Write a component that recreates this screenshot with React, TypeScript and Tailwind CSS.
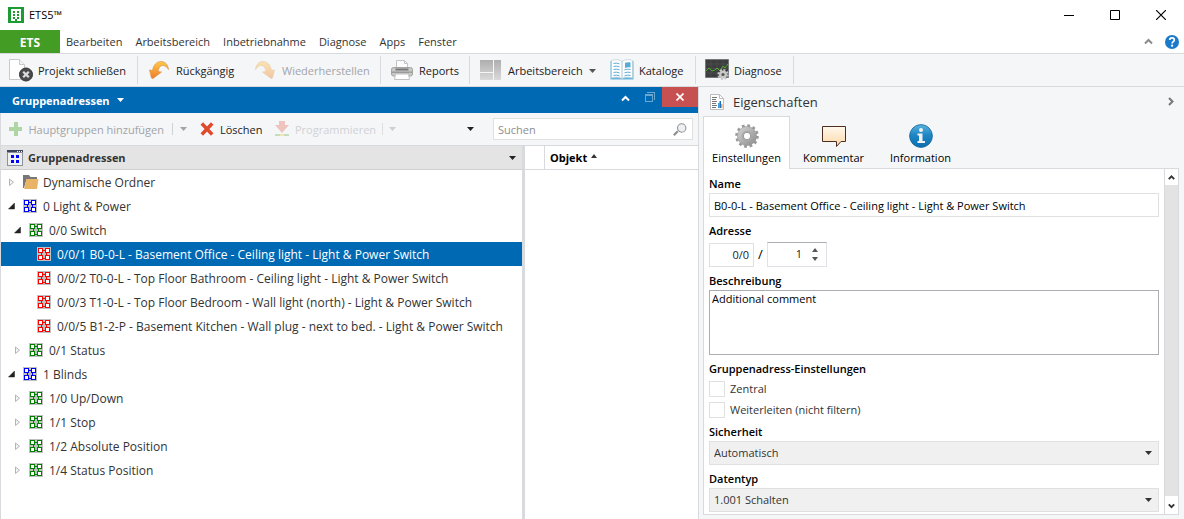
import { useState, type ReactNode } from "react";

type Kind = "folder" | "main" | "middle" | "address";

interface Row {
  label: string;
  kind: Kind;
  level: number;
  open?: boolean;
}

const rows: Row[] = [
  { label: "Dynamische Ordner", kind: "folder", level: 0, open: false },
  { label: "0 Light & Power", kind: "main", level: 0, open: true },
  { label: "0/0 Switch", kind: "middle", level: 1, open: true },
  { label: "0/0/1 B0-0-L - Basement Office - Ceiling light - Light & Power Switch", kind: "address", level: 2 },
  { label: "0/0/2 T0-0-L - Top Floor Bathroom - Ceiling light - Light & Power Switch", kind: "address", level: 2 },
  { label: "0/0/3 T1-0-L - Top Floor Bedroom - Wall light (north) - Light & Power Switch", kind: "address", level: 2 },
  { label: "0/0/5 B1-2-P - Basement Kitchen - Wall plug - next to bed. - Light & Power Switch", kind: "address", level: 2 },
  { label: "0/1 Status", kind: "middle", level: 1, open: false },
  { label: "1 Blinds", kind: "main", level: 0, open: true },
  { label: "1/0 Up/Down", kind: "middle", level: 1, open: false },
  { label: "1/1 Stop", kind: "middle", level: 1, open: false },
  { label: "1/2 Absolute Position", kind: "middle", level: 1, open: false },
  { label: "1/4 Status Position", kind: "middle", level: 1, open: false },
];

const groupColors = { main: "#0000ff", middle: "#008000", address: "#ff0000" };
const indents = ["pl-1.5", "pl-3", "pl-5"];

function Down({ className = "" }: { className?: string }) {
  return (
    <svg className={className} width="7" height="4" viewBox="0 0 7 4" fill="currentColor" aria-hidden="true">
      <path d="M0 0h7L3.500 4z" />
    </svg>
  );
}

function Up({ className = "" }: { className?: string }) {
  return (
    <svg className={className} width="6" height="4" viewBox="0 0 6 4" fill="currentColor" aria-hidden="true">
      <path d="M0 4h6L3 0z" />
    </svg>
  );
}

function Chevron({ d, size = 9, width = 2 }: { d: string; size?: number; width?: number }) {
  return (
    <svg width={size} height={size} viewBox="0 0 9 9" fill="none" stroke="currentColor" strokeWidth={width} aria-hidden="true">
      <path d={d} />
    </svg>
  );
}

const chevronUp = "M1 6.5l3.5-3.5L8 6.5";
const chevronDown = "M1 3l3.5 3.5L8 3";
const chevronRight = "M3 1l3.5 3.5L3 8";

function GroupIcon({ color }: { color: string }) {
  return (
    <svg width="14" height="14" viewBox="0 0 14 14" shapeRendering="crispEdges" aria-hidden="true">
      <path d="M0 0h14v14H0z" fill="#c0c0c0" />
      <path d="M1 1h5v5H1zM8 1h5v5H8zM1 8h5v5H1zM8 8h5v5H8zM6 3h2v1H6zM6 11h2v1H6zM4 6h1v2H4zM9 6h1v2H9z" fill={color} />
      <path d="M2 2h3v3H2zM9 2h3v3H9zM2 9h3v3H2zM9 9h3v3H9z" fill="#fff" />
    </svg>
  );
}

function FolderIcon() {
  return (
    <svg width="16" height="14" viewBox="0 0 16 14" aria-hidden="true">
      <path d="M0 0h6l1.500 2H14v2.500H3.500L1 13H0z" fill="#777" />
      <path d="M3.500 4H15.500L14 14H1z" fill="#e8b466" />
    </svg>
  );
}

function Expander({ open }: { open?: boolean }) {
  return (
    <span className="flex w-4 shrink-0">
      {open !== undefined && (
        <svg width="8" height="8" viewBox="0 0 8 8" aria-hidden="true">
          {open ? <path d="M7.500 1v6h-6z" fill="#222" stroke="#222" strokeWidth=".5" /> : <path d="M2.500 1v6.500L6.500 4.200z" fill="#f4f4f4" stroke="#b4b4b4" />}
        </svg>
      )}
    </span>
  );
}

function AppIcon() {
  return (
    <svg width="16" height="16" viewBox="0 0 16 16" shapeRendering="crispEdges" aria-hidden="true">
      <path d="M0 0h16v16H0z" fill="#1d9b35" />
      <path d="M3 2h10v12H3z" fill="#fff" />
      <path d="M5 4h2v2H5zM9 4h2v2H9zM5 7h2v2H5zM9 7h2v2H9zM5 10h2v2H5zM9 10h2v2H9zM7 12h2v2H7z" fill="#1d9b35" />
    </svg>
  );
}

function CloseProjectIcon() {
  return (
    <svg width="24" height="24" viewBox="0 0 24 24" aria-hidden="true">
      <path d="M.5 1.500h10l5 5v15H.5z" fill="#fff" stroke="#c9c9c9" />
      <path d="M10.500 1.500v5h5" fill="#f2f2f2" stroke="#c9c9c9" />
      <circle cx="17" cy="16.500" r="6.500" fill="#4a4a4c" stroke="#333" />
      <path d="M14.200 13.700l5.600 5.600m0-5.600l-5.600 5.600" stroke="#ddd" strokeWidth="2.200" />
    </svg>
  );
}

function UndoIcon({ flip = false }: { flip?: boolean }) {
  const id = flip ? "arrow-redo" : "arrow-undo";
  return (
    <svg width="20" height="20" viewBox="0 0 20 20" className={flip ? "-scale-x-100 opacity-40" : ""} aria-hidden="true">
      <linearGradient id={id} x2="0" y2="1">
        <stop stopColor="#ffc94a" />
        <stop offset="1" stopColor="#f07c28" />
      </linearGradient>
      <path d="M.5 10l3 .5C4.500 5 7.500 1.500 12 1.500c4 0 7 3 7.500 8-1.500-2.500-3.500-4-6-4-2.500.2-4 2.500-4.500 6l3.500.5L4 18.500 2.500 18z" fill={`url(#${id})`} stroke="#d98b3a" strokeWidth=".6" />
    </svg>
  );
}

function PrinterIcon() {
  return (
    <svg width="22" height="20" viewBox="0 0 22 20" aria-hidden="true">
      <path d="M5.500.5h8l3 3V9h-11z" fill="#fdfdfd" stroke="#c4c4c4" />
      <path d="M13.500.5v3h3" fill="none" stroke="#c4c4c4" />
      <rect x=".5" y="7.500" width="21" height="8.500" rx="2" fill="#c9c9c9" stroke="#a3a3a3" />
      <path d="M1 11.500h20v1.500H1z" fill="#9a9a9a" />
      <path d="M4.500 8.500h13v2h-13z" fill="#777" />
      <path d="M4.500 14h13l1 5.500h-15z" fill="#fff" stroke="#c2c2c2" />
      <path d="M18 11.500h2v1h-2z" fill="#8ed06a" />
    </svg>
  );
}

function WorkspaceIcon() {
  return (
    <svg width="21" height="20" viewBox="0 0 21 20" aria-hidden="true">
      <linearGradient id="pane" x2="0" y2="1">
        <stop stopColor="#aeaeae" />
        <stop offset="1" stopColor="#dadada" />
      </linearGradient>
      <path d="M0 0h13v12H0zM0 13h13v7H0zM14 0h7v20h-7z" fill="url(#pane)" />
    </svg>
  );
}

function CatalogIcon() {
  return (
    <svg width="24" height="22" viewBox="0 0 24 22" aria-hidden="true">
      <path d="M.5 2h23v18.500H.5z" fill="#6bb6dd" />
      <path d="M1.500 1.500C5 .2 9 .2 12 2.500v17c-3-1.500-7-1.800-10.500-.6zM22.500 1.500C19 .2 15 .2 12 2.500v17c3-1.500 7-1.800 10.500-.6z" fill="#fff" stroke="#b5cbd6" strokeWidth=".7" />
      <path d="M3.500 4.500c2-.5 4-.4 6 .4M3.500 7.500c2-.5 4-.4 6 .4M3.500 10.500c2-.5 4-.4 6 .4M3.500 13.500c2-.5 4-.4 6 .4M3.500 16.500c2-.5 4-.4 6 .4M14.500 10.900c2-.8 4-.9 6-.4M14.500 13.900c2-.8 4-.9 6-.4M14.500 16.900c2-.8 4-.9 6-.4" fill="none" stroke="#58abd6" />
      <path d="M15 3.800c2-.8 4-.8 5.500-.4v5c-2-.4-4-.2-5.500.5z" fill="#58abd6" />
    </svg>
  );
}

function DiagnosisIcon() {
  return (
    <svg width="24" height="22" viewBox="0 0 24 22" aria-hidden="true">
      <path d="M.5.5h23v18H.5z" fill="#3d3d3d" stroke="#777" />
      <path d="M1 5h22M1 9.500h22M1 14h22M6 1v17M12 1v17M18 1v17" stroke="#555" strokeWidth=".6" />
      <path d="M1 12l3-3 3 3 3-1 2-2 3 3 3-5 2 2 3-4" fill="none" stroke="#4fae2f" />
      <circle cx="18" cy="15.500" r="4" fill="#c8c8c8" />
      <circle cx="18" cy="15.500" r="4.600" fill="none" stroke="#c8c8c8" strokeWidth="2" strokeDasharray="1.900 1.700" />
      <circle cx="18" cy="15.500" r="1.600" fill="#555" />
    </svg>
  );
}

function WindowGridIcon() {
  return (
    <svg width="16" height="16" viewBox="0 0 16 16" shapeRendering="crispEdges" aria-hidden="true">
      <path d="M0 0h16v16H0z" fill="#8b919d" />
      <path d="M0 0h16v2H0z" fill="#3c465c" />
      <path d="M10 1h1v1h-1zM12 1h1v1h-1zM14 1h1v1h-1z" fill="#fff" />
      <path d="M1 3h14v12H1z" fill="#eef0f3" />
      <path d="M4 5h3v3H4zM9 5h3v3H9zM4 10h3v3H4zM9 10h3v3H9z" fill="#0000ff" />
    </svg>
  );
}

function PropertiesIcon() {
  return (
    <svg width="14" height="16" viewBox="0 0 14 16" aria-hidden="true">
      <path d="M.5.5h9l4 4v11H.5z" fill="#fff" stroke="#bdbdbd" />
      <path d="M9.500.5v4h4" fill="none" stroke="#bdbdbd" />
      <path d="M2 3.500h5M2 5.500h4M2 7.500h5M2 9.500h4M2 11.500h5M2 13.500h4" stroke="#777" />
      <path d="M8 9h1.500v5H8z" fill="#3a9ad9" />
      <path d="M9.500 7H11v7H9.500z" fill="#1f6fb5" />
      <path d="M11 10h1.500v4H11z" fill="#f0a050" />
    </svg>
  );
}

function GearIcon() {
  return (
    <svg width="24" height="24" viewBox="0 0 24 24" aria-hidden="true">
      <linearGradient id="gear" x2="1" y2="1">
        <stop stopColor="#d6d6d6" />
        <stop offset="1" stopColor="#8a8a8a" />
      </linearGradient>
      <circle cx="12" cy="12" r="10.500" fill="none" stroke="#999" strokeWidth="2.600" strokeDasharray="2.750 2.747" />
      <circle cx="12" cy="12" r="9.600" fill="url(#gear)" stroke="#929292" strokeWidth=".6" />
      <circle cx="12" cy="12" r="5.200" fill="#aaa" />
      <circle cx="12" cy="12" r="3.700" fill="#fff" stroke="#888" strokeWidth=".8" />
    </svg>
  );
}

function CommentIcon() {
  return (
    <svg width="24" height="24" viewBox="0 0 24 24" aria-hidden="true">
      <linearGradient id="bubble" x2="0" y2="1">
        <stop stopColor="#fff7ec" />
        <stop offset="1" stopColor="#ffd9a8" />
      </linearGradient>
      <path d="M.5 2.500h23v15H19l-4.500 5v-5H.5z" fill="url(#bubble)" stroke="#4c2f22" />
    </svg>
  );
}

function InfoIcon() {
  return (
    <svg width="24" height="24" viewBox="0 0 24 24" aria-hidden="true">
      <linearGradient id="info" x2="0" y2="1">
        <stop stopColor="#5ab4de" />
        <stop offset=".45" stopColor="#1f86c4" />
        <stop offset="1" stopColor="#0a6db0" />
      </linearGradient>
      <circle cx="12" cy="12" r="11.400" fill="url(#info)" stroke="#15669c" strokeWidth=".8" />
      <circle cx="12" cy="6" r="2" fill="#f2f2f2" />
      <path d="M8.500 9.500h5V17H16v2H8.500v-2H10v-5.500H8.500z" fill="#f2f2f2" />
    </svg>
  );
}

function SearchIcon() {
  return (
    <svg width="14" height="13" viewBox="0 0 14 13" aria-hidden="true">
      <path d="M.8 12.200l4-4" stroke="#8b8b8b" strokeWidth="2" />
      <circle cx="8.700" cy="5" r="4.200" fill="#eef1f4" stroke="#939393" strokeWidth="1.100" />
    </svg>
  );
}

function ToolButton({ icon, children, className, disabled }: { icon: ReactNode; children: ReactNode; className: string; disabled?: boolean }) {
  return (
    <button type="button" disabled={disabled} className={`flex h-7 shrink-0 items-center whitespace-nowrap text-[#222] disabled:text-[#a2a4a7] ${className}`}>
      {icon}
      <span className="pt-0.5">{children}</span>
    </button>
  );
}

function Divider() {
  return <span className="h-7 w-px shrink-0 bg-[#d8dadd]" />;
}

function Label({ htmlFor, children, className = "" }: { htmlFor: string; children: ReactNode; className?: string }) {
  return (
    <label htmlFor={htmlFor} className={`mt-1.5 block text-[11px] leading-4 font-semibold text-black ${className}`}>
      {children}
    </label>
  );
}

function Select({ id, value }: { id: string; value: string }) {
  return (
    <div className="grid items-center text-[#333]">
      <select id={id} className="col-start-1 row-start-1 h-6 w-full appearance-none border border-[#e0e0e0] bg-[#f0f0f0] px-1 text-[11px] outline-none">
        <option>{value}</option>
      </select>
      <Down className="pointer-events-none col-start-1 row-start-1 mr-[7px] justify-self-end" />
    </div>
  );
}

function Check({ children }: { children: ReactNode }) {
  return (
    <label className="flex h-4 items-center gap-[5px] text-[#333]">
      <input type="checkbox" className="size-4 appearance-none border border-[#e0e0e0] bg-white checked:bg-[#0069b4]" />
      {children}
    </label>
  );
}

export default function App() {
  const [selected, setSelected] = useState(3);
  return (
    <div className="flex min-h-screen flex-col bg-white font-['Open_Sans','Noto_Sans',sans-serif] text-[11px] text-[#222]">
      <header className="flex h-[30px] items-center bg-white pl-2 text-black">
        <AppIcon />
        <h1 className="ml-[5px] flex-1 text-[11px]">ETS5™</h1>
        <button type="button" aria-label="Minimieren" className="flex w-[46px] justify-center">
          <svg width="10" height="10" aria-hidden="true"><path d="M0 5.500h10" stroke="#000" /></svg>
        </button>
        <button type="button" aria-label="Maximieren" className="flex w-[46px] justify-center">
          <svg width="10" height="10" aria-hidden="true"><path d="M.5.5h9v9h-9z" fill="none" stroke="#000" /></svg>
        </button>
        <button type="button" aria-label="Schließen" className="flex w-[46px] justify-center">
          <svg width="10" height="10" aria-hidden="true"><path d="M0 0l10 10M10 0L0 10" stroke="#000" strokeWidth="1.200" /></svg>
        </button>
      </header>

      <nav className="flex h-6 items-center border-b border-[#d8dadd]">
        <button type="button" className="h-[23px] w-[60px] bg-[#439c23] pt-0.5 text-[12px] font-bold text-white">ETS</button>
        <div className="ml-1.5 flex flex-1 gap-[13px] pt-0.5 text-[#333]">
          {["Bearbeiten", "Arbeitsbereich", "Inbetriebnahme", "Diagnose", "Apps", "Fenster"].map((m) => (
            <button key={m} type="button">{m}</button>
          ))}
        </div>
        <button type="button" aria-label="Menüband minimieren" className="text-[#8a8a8a]"><Chevron d={chevronUp} /></button>
        <button type="button" aria-label="Hilfe" className="mr-[5px] ml-3 flex">
          <svg width="14" height="14" viewBox="0 0 14 14" aria-hidden="true">
            <circle cx="7" cy="7" r="7" fill="#1979ca" />
            <path d="M4.700 5.100C4.700 3.600 5.700 2.900 7 2.900s2.300.8 2.300 2c0 1.600-2.200 1.700-2.200 3.600" fill="none" stroke="#fff" strokeWidth="1.700" />
            <circle cx="7.100" cy="10.700" r="1.100" fill="#fff" />
          </svg>
        </button>
      </nav>

      <div className="flex h-[33px] items-center border-b border-[#d8dadd] bg-[#f5f6f8]">
        <ToolButton icon={<CloseProjectIcon />} className="w-[137px] gap-[5px] pl-[9px]">Projekt schließen</ToolButton>
        <Divider />
        <ToolButton icon={<UndoIcon />} className="w-[117px] gap-[7px] pl-[11px]">Rückgängig</ToolButton>
        <ToolButton icon={<UndoIcon flip />} disabled className="w-[125px] gap-[7px]">Wiederherstellen</ToolButton>
        <Divider />
        <ToolButton icon={<PrinterIcon />} className="w-[88px] gap-1.5 pl-2.5">Reports</ToolButton>
        <Divider />
        <ToolButton icon={<WorkspaceIcon />} className="w-[140px] gap-[7px] pl-2.5">
          <span className="flex items-center gap-1.5">
            Arbeitsbereich
            <Down className="text-[#555]" />
          </span>
        </ToolButton>
        <ToolButton icon={<CatalogIcon />} className="w-[85px] gap-[5px]">Kataloge</ToolButton>
        <Divider />
        <ToolButton icon={<DiagnosisIcon />} className="w-[97px] gap-[5px] pl-[9px]">Diagnose</ToolButton>
        <Divider />
      </div>

      <main className="flex flex-1">
        <section className="flex min-w-0 flex-1 flex-col border-r border-[#d8dadd]">
          <div className="flex h-[26px] items-start bg-[#0069b4] text-white">
            <button type="button" className="flex h-full items-center gap-[7px] pl-3 font-bold">
              <span className="pt-0.5">Gruppenadressen</span>
              <Down />
            </button>
            <span className="flex-1" />
            <button type="button" aria-label="Einklappen" className="flex h-[22px] w-6 items-center justify-center"><Chevron d={chevronUp} /></button>
            <button type="button" aria-label="Wiederherstellen" className="flex h-5 w-[25px] items-center justify-center">
              <svg width="10" height="10" viewBox="0 0 10 10" fill="#6aa8d4" shapeRendering="crispEdges" aria-hidden="true">
                <path d="M0 2h8v8H0zM1 4v5h6V4z" fillRule="evenodd" />
                <path d="M2 0h8v8H9V1H2z" />
              </svg>
            </button>
            <button type="button" aria-label="Fenster schließen" className="flex h-5 w-9 items-center justify-center bg-[#c75050]">
              <svg width="8" height="8" viewBox="0 0 8 8" aria-hidden="true"><path d="M.5.5l7 7m0-7l-7 7" stroke="#fff" strokeWidth="1.700" /></svg>
            </button>
          </div>

          <div className="flex flex-1 flex-col border-l border-[#d8dadd]">
            <div className="flex h-[33px] items-center border-b border-[#d8dadd] bg-[#f5f6f8] text-[#a2a4a7]">
              <button type="button" disabled className="flex w-[163px] items-center gap-1.5 pl-2 whitespace-nowrap">
                <svg width="14" height="14" aria-hidden="true"><path d="M5 0h4v5h5v4H9v5H5V9H0V5h5z" fill="#afd5a5" /></svg>
                <span className="pt-0.5">Hauptgruppen hinzufügen</span>
              </button>
              <span className="ml-2 h-3 w-px bg-[#d0d2d5]" />
              <Down className="ml-[7px]" />
              <button type="button" className="ml-[13px] flex w-[75px] items-center gap-1.5 text-[#222]">
                <svg width="14" height="14" viewBox="0 0 14 14" aria-hidden="true"><path d="M1.800 1.500l10.400 11M12.200 1.500l-10.400 11" stroke="#e04a2b" strokeWidth="3.400" /></svg>
                <span className="pt-0.5">Löschen</span>
              </button>
              <button type="button" disabled className="flex w-[107px] items-center gap-1.5 text-[#d0d2d5]">
                <svg width="14" height="16" viewBox="0 0 14 16" aria-hidden="true">
                  <path d="M4 0h6v4h4l-7 8-7-8h4z" fill="#efc3be" />
                  <path d="M0 13h14v2H0z" fill="#c5dfbd" />
                  <path d="M5 13h4v2H5z" fill="#f2e6b4" />
                </svg>
                <span className="pt-0.5">Programmieren</span>
              </button>
              <span className="h-3 w-px bg-[#dcdee0]" />
              <Down className="ml-1.5 text-[#cdcfd2]" />
              <span className="flex-1" />
              <Down className="mr-[19px] text-[#222]" />
              <div className="mr-[5px] flex h-[22px] w-[200px] items-center border border-[#e0e0e0] bg-white pr-[5px]">
                <input type="text" aria-label="Suchen" placeholder="Suchen" className="min-w-0 flex-1 bg-transparent pt-0.5 pl-1 outline-none placeholder:text-[#8e8e8e]" />
                <SearchIcon />
              </div>
            </div>

            <div className="flex flex-1">
              <div className="min-w-0 flex-1">
                <div className="flex h-6 items-center gap-[5px] border-b border-[#cfcfcf] bg-[#e4e4e4] pr-1.5 pl-1.5 font-bold text-[#333]">
                  <WindowGridIcon />
                  <span className="flex-1 pt-0.5">Gruppenadressen</span>
                  <Down className="text-[#222]" />
                </div>
                <ul role="tree" aria-label="Gruppenadressen" className="text-[12px]">
                  {rows.map((row, i) => (
                    <li
                      key={row.label}
                      role="treeitem"
                      aria-selected={i === selected}
                      aria-expanded={row.open}
                      onClick={() => setSelected(i)}
                      className={`flex h-6 cursor-default items-center whitespace-nowrap ${indents[row.level]} ${i === selected ? "bg-[#0069b4] text-white" : "text-[#333]"}`}
                    >
                      <Expander open={row.open} />
                      <span className={row.kind === "folder" ? "mr-1" : "mr-1.5"}>
                        {row.kind === "folder" ? <FolderIcon /> : <GroupIcon color={groupColors[row.kind]} />}
                      </span>
                      <span className="pt-0.5">{row.label}</span>
                    </li>
                  ))}
                </ul>
              </div>
              <div className="w-[3px] bg-[#d8dadd]" />
              <div className="w-[173px]">
                <div className="flex h-6 border-b border-[#d8dadd] bg-white font-bold text-black">
                  <span className="w-5 border-r border-[#d8dadd]" />
                  <button type="button" className="flex items-center gap-1 pl-[5px]">
                    <span className="pt-0.5">Objekt</span>
                    <Up className="mb-1 text-[#333]" />
                  </button>
                </div>
              </div>
            </div>
          </div>
        </section>

        <aside className="flex w-[485px] flex-col bg-[#f5f6f8] pr-[5px] pb-1 pl-1">
          <div className="flex h-[29px] items-center pl-[7px]">
            <PropertiesIcon />
            <h2 className="ml-[9px] flex-1 pt-0.5 text-[13px] text-[#333]">Eigenschaften</h2>
            <button type="button" aria-label="Eigenschaften ausblenden" className="mr-1 text-[#777]"><Chevron d={chevronRight} /></button>
          </div>
          <div role="tablist" className="flex h-[53px] text-black">
            {[
              { name: "Einstellungen", icon: <GearIcon /> },
              { name: "Kommentar", icon: <CommentIcon /> },
              { name: "Information", icon: <InfoIcon /> },
            ].map((t, i) => (
              <button
                key={t.name}
                type="button"
                role="tab"
                aria-selected={i === 0}
                className={`flex w-[87px] flex-col items-center gap-0.5 ${i === 0 ? "border border-b-0 border-[#d8dadd] bg-white pt-[7px]" : "border-b border-[#d8dadd] pt-2"}`}
              >
                {t.icon}
                <span className="leading-4">{t.name}</span>
              </button>
            ))}
            <span className="flex-1 border-b border-[#d8dadd]" />
          </div>
          <div className="flex flex-1 border border-t-0 border-[#d8dadd] bg-white">
            <form className="min-w-0 flex-1 px-[5px] pt-px pb-0.5" onSubmit={(e) => e.preventDefault()}>
              <Label htmlFor="name" className="mb-px">Name</Label>
              <input id="name" type="text" defaultValue="B0-0-L - Basement Office - Ceiling light - Light & Power Switch" className="block h-6 w-full border border-[#e0e0e0] px-1 text-black outline-none" />

              <Label htmlFor="sub-address" className="mb-[3px]">Adresse</Label>
              <div className="flex h-[25px] items-center">
                <input type="text" aria-label="Gruppe" readOnly value="0/0" className="h-6 w-[45px] border border-[#e0e0e0] px-1 text-right outline-none" />
                <span className="w-[13px] text-center text-[13px] text-black">/</span>
                <div className="flex h-[25px] w-[60px] items-center border border-[#dfe2e8] border-t-[#abadb3] bg-white pr-2">
                  <input id="sub-address" type="text" defaultValue="1" className="w-full min-w-0 flex-1 bg-transparent pr-2.5 text-right outline-none" />
                  <span className="flex flex-col gap-[5px] text-[#555]">
                    <button type="button" aria-label="Erhöhen" className="flex"><Up /></button>
                    <button type="button" aria-label="Verringern" className="flex rotate-180"><Up /></button>
                  </span>
                </div>
              </div>

              <Label htmlFor="description" className="mb-px">Beschreibung</Label>
              <textarea id="description" defaultValue="Additional comment" className="block h-[65px] w-full resize-none border border-[#abadb3] px-0.5 leading-4 text-black outline-none" />

              <div role="group" aria-labelledby="group-settings" className="pt-1.5">
                <h3 id="group-settings" className="leading-4 font-semibold text-black">Gruppenadress-Einstellungen</h3>
                <div className="flex flex-col gap-[5px] pt-1">
                  <Check>Zentral</Check>
                  <Check>Weiterleiten (nicht filtern)</Check>
                </div>
              </div>

              <Label htmlFor="security" className="mb-px">Sicherheit</Label>
              <Select id="security" value="Automatisch" />
              <Label htmlFor="datatype" className="mb-px">Datentyp</Label>
              <Select id="datatype" value="1.001 Schalten" />
            </form>
            <div className="flex w-[14px] flex-col border-l border-[#d8dadd] bg-[#e3e3e3] text-[#333]">
              <button type="button" aria-label="Nach oben" className="flex h-4 items-center justify-center bg-white"><Chevron d={chevronUp} size={7} width={2.4} /></button>
              <span className="flex-1" />
              <button type="button" aria-label="Nach unten" className="flex h-[18px] items-center justify-center bg-white"><Chevron d={chevronDown} size={7} width={2.4} /></button>
            </div>
          </div>
        </aside>
      </main>
    </div>
  );
}
